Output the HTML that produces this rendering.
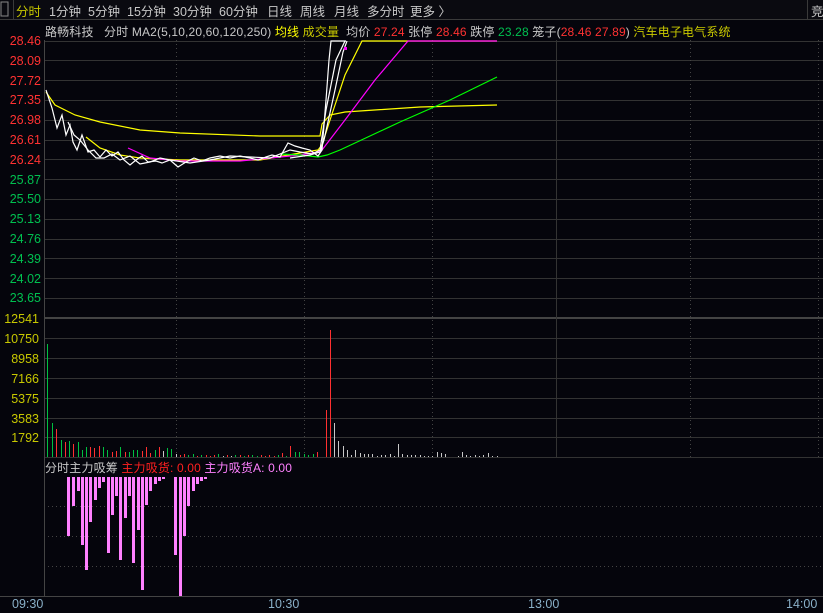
<!DOCTYPE html>
<html><head><meta charset="utf-8"><style>
html,body{margin:0;padding:0;background:#05050c;width:823px;height:613px;overflow:hidden;font-family:"Liberation Sans","Noto Sans CJK SC",sans-serif;font-size:12px}
.t{position:absolute;white-space:nowrap}
.tb{position:absolute;top:1px;color:#c8c8c8;white-space:nowrap;font-size:12.5px}
</style></head><body>
<svg id="s" width="823" height="613" style="position:absolute;left:0;top:0" xmlns="http://www.w3.org/2000/svg">
<rect width="823" height="613" fill="#05050c"/>
<rect x="0" y="0" width="823" height="19" fill="#0a0a10"/>
<line x1="0" y1="19.5" x2="823" y2="19.5" stroke="#3a3a3a"/>
<rect x="1" y="2" width="7" height="14" fill="none" stroke="#888"/>
<line x1="13.5" y1="0" x2="13.5" y2="19" stroke="#3a3a3a"/>
<line x1="807.5" y1="0" x2="807.5" y2="19" stroke="#3a3a3a"/>
<g id="grid" stroke="#333" stroke-width="1"></g>
<g id="draw"></g>
</svg>
<div class="tb" style="left:16px;color:#c8c800">分时</div>
<div class="tb" style="left:49px">1分钟</div>
<div class="tb" style="left:88px">5分钟</div>
<div class="tb" style="left:127px">15分钟</div>
<div class="tb" style="left:173px">30分钟</div>
<div class="tb" style="left:219px">60分钟</div>
<div class="tb" style="left:267px">日线</div>
<div class="tb" style="left:300px">周线</div>
<div class="tb" style="left:334px">月线</div>
<div class="tb" style="left:367px">多分时</div>
<div class="tb" style="left:410px">更多 〉</div>
<div class="tb" style="left:811px">竞</div>
<div class="t" style="left:45px;top:23px;color:#c8c8c8;font-size:12px;letter-spacing:0.15px">路畅科技&nbsp;&nbsp;&nbsp;分时 MA2(5,10,20,60,120,250) <span style="color:#ffff00">均线</span> <span style="color:#c8c800">成交量</span>&nbsp;&nbsp;均价 <span style="color:#ff3232">27.24</span> 张停 <span style="color:#ff3232">28.46</span> 跌停 <span style="color:#00c050">23.28</span> 笼子(<span style="color:#ff3232">28.46 27.89</span>) <span style="color:#c8c800">汽车电子电气系统</span></div>
<div class="t" style="left:45px;top:459px;color:#c8c8c8;font-size:12px;letter-spacing:0.15px">分时主力吸筹 <span style="color:#ff2020">主力吸货: 0.00</span> <span style="color:#ff80ff">主力吸货A: 0.00</span></div>
<div id="lab"></div>
<div class="t" style="left:12px;top:597px;color:#8ab0c8;font-size:12.5px">09:30</div>
<div class="t" style="left:268px;top:597px;color:#8ab0c8;font-size:12.5px">10:30</div>
<div class="t" style="left:528px;top:597px;color:#8ab0c8;font-size:12.5px">13:00</div>
<div class="t" style="left:786px;top:597px;color:#8ab0c8;font-size:12.5px">14:00</div>
<script>
var NS="http://www.w3.org/2000/svg",g=document.getElementById('grid'),d=document.getElementById('draw');
function el(p,a,t){var e=document.createElementNS(NS,t);for(var k in a)e.setAttribute(k,a[k]);p.appendChild(e);return e}
function ln(x1,y1,x2,y2,c,da){var o={x1:x1,y1:y1,x2:x2,y2:y2,stroke:c||'#333'};if(da)o['stroke-dasharray']=da;el(g,o,'line')}
for(var i=0;i<14;i++){var y=40.5+i*19.8;ln(44,Math.round(y)+.5,823,Math.round(y)+.5)}
ln(44,318.5,823,318.5,'#444');ln(44,317.5,823,317.5,'#444');
for(var i=1;i<7;i++){var y=318+i*19.9;ln(44,Math.round(y)+.5,823,Math.round(y)+.5)}
ln(44,457.5,823,457.5,'#333');
[506.5,536.5,566.5].forEach(function(y){ln(44,y,823,y,'#444','1,3')});
ln(0,596.5,823,596.5,'#444');
ln(44.5,40,44.5,597,'#444');
ln(556.5,40,556.5,457,'#333');
[176.5,304.5,432.5,690.5,818.5].forEach(function(x){ln(x,40,x,457,'#444','1,3')});
var L=document.getElementById('lab'),pr=["28.46","28.09","27.72","27.35","26.98","26.61","26.24","25.87","25.50","25.13","24.76","24.39","24.02","23.65"];
pr.forEach(function(p,i){var c=i<7?'#ff3232':'#00c050';var y=40+i*19.8-6;L.innerHTML+='<div class="t" style="right:782px;top:'+y+'px;color:'+c+';font-size:12.5px">'+p+'</div>'});
["12541","10750","8958","7166","5375","3583","1792"].forEach(function(p,i){var y=318+i*19.9-6;L.innerHTML+='<div class="t" style="right:784px;top:'+y+'px;color:#c8c800;font-size:12.5px">'+p+'</div>'});
function pl(pts,c){el(d,{points:pts,fill:'none',stroke:c,'stroke-width':1.2},'polyline')}
pl("46,92 55,105 75,115 100,122 140,130 180,133 260,136 320,136 322,124 330,115 345,112 420,107 497,105","#ffff00");
pl("86,137 100,148 120,155 140,158 180,160 260,160 300,153 318,150 322,145 330,120 345,75 362,41 497,41","#ffff00");
pl("128,148 150,158 180,161 240,161 300,155 318,152 322,150 345,120 375,80 408,41 497,41","#ff00ff");
pl("280,154 300,155 318,157 327,155 340,150 400,122 450,100 497,77","#00ff00");
pl("46,90 52,108 57,128 62,115 66,135 70,125 73,142 77,150 82,135 88,152 94,150 100,157 106,150 112,156 118,152 124,160 130,165 136,160 142,156 148,162 156,161 162,163 170,160 178,167 186,162 194,158 202,161 210,158 220,156 230,158 240,156 250,158 258,160 266,157 272,155 280,157 288,143 295,146 302,148 310,150 318,156 322,150 326,100 329,60 331,41 346,41","#ffffff");
pl("68,122 74,135 80,140 88,150 96,158 104,158 112,154 120,160 130,156 140,164 150,162 160,158 170,160 190,163 210,160 230,156 250,157 270,158 290,150 300,152 312,154 320,150 326,110 336,60 345,41","#ffffff");
pl("290,158 310,155 320,152 324,140 335,90 343,52 347,41","#ffffff");
el(d,{x:344,y:47,width:3,height:3,fill:'#ff00ff'},'rect');
var V=[[47,344,'g'],[52,423,'g'],[56,429,'r'],[61,440,'g'],[65,442,'r'],[69,441,'g'],[73,444,'r'],[78,442,'g'],[82,450,'g'],[86,447,'g'],[90,447,'r'],[94,448,'r'],[99,446,'r'],[103,447,'g'],[107,450,'g'],[112,452,'r'],[116,451,'r'],[120,447,'g'],[125,452,'r'],[129,452,'g'],[133,450,'g'],[137,450,'g'],[142,451,'r'],[146,447,'r'],[150,453,'r'],[155,450,'g'],[159,447,'r'],[163,451,'w'],[167,448,'g'],[171,449,'g'],[176,454,'w'],[180,455,'r'],[184,454,'r'],[188,455,'g'],[193,454,'g'],[197,456,'r'],[201,455,'g'],[206,455,'r'],[210,456,'r'],[214,455,'r'],[218,454,'g'],[223,456,'w'],[227,455,'r'],[231,456,'w'],[235,455,'g'],[240,455,'r'],[244,456,'g'],[248,455,'r'],[252,455,'g'],[257,456,'g'],[261,455,'r'],[265,456,'r'],[269,455,'r'],[274,456,'r'],[278,455,'g'],[282,453,'r'],[286,456,'g'],[290,446,'r'],[295,452,'g'],[299,452,'g'],[304,454,'g'],[308,455,'g'],[313,454,'g'],[317,452,'r'],[326,410,'r'],[330,330,'r'],[334,423,'w'],[338,441,'w'],[343,446,'w'],[347,450,'w'],[351,455,'w'],[355,450,'w'],[360,453,'w'],[364,454,'w'],[368,454,'w'],[372,454,'w'],[377,456,'w'],[381,455,'w'],[385,455,'w'],[390,454,'w'],[394,456,'w'],[398,444,'w'],[402,454,'w'],[407,455,'w'],[411,455,'w'],[415,455,'w'],[420,455,'w'],[424,456,'w'],[428,456,'w'],[432,456,'w'],[437,452,'w'],[441,453,'w'],[445,454,'w'],[449,457,'w'],[454,457,'w'],[458,456,'w'],[462,452,'w'],[466,455,'w'],[470,456,'w'],[475,455,'w'],[479,456,'w'],[483,455,'w'],[488,453,'w'],[492,456,'w'],[497,456,'w']];
var C={g:'#00c040',r:'#ff3030',w:'#c8c8c8'};
V.forEach(function(v){el(d,{x:v[0],y:v[1],width:1,height:457-v[1],fill:C[v[2]]},'rect')});
var M=[[67,536],[72,506],[77,491],[81,545],[85,570],[89,522],[94,500],[98,488],[102,482],[107,553],[111,515],[115,496],[119,560],[124,518],[128,496],[132,563],[137,530],[141,590],[145,505],[149,491],[154,484],[158,481],[162,479],[174,555],[179,596],[183,536],[187,506],[192,491],[196,484],[200,481],[204,479]];
M.forEach(function(m){el(d,{x:m[0],y:477,width:3,height:m[1]-477,fill:'#ff80ff'},'rect')});
</script>
</body></html>
